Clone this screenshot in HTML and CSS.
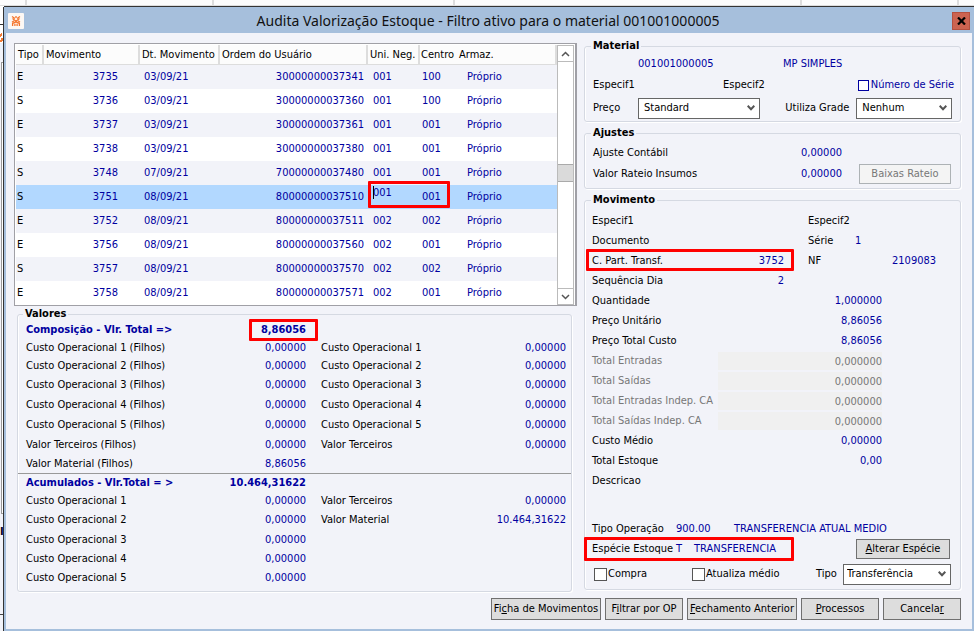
FILE: index.html
```
<!DOCTYPE html>
<html lang="pt-BR">
<head>
    <meta charset="utf-8">
    <title>Audita Valorização Estoque</title>
    <link rel="stylesheet" href="styles.css">
</head>
<body>

<div class="back-header">
    <span></span><span></span><span></span><span></span><span></span><span></span>
</div>

<div class="desktop">
    <div class="back-edge">
        <div class="back-title"></div>
        <div class="back-logo">
            <svg width="3" height="10" viewBox="0 0 3 10"><path d="M0 1h1v-1h1v3h-1v1h-1zM1 5h2v3h-1v1h-2v-2h1z" fill="#f47b35"/></svg>
        </div>
        <div class="back-tool"></div>
        <div class="back-list"></div>
        <div class="back-text">I</div>
        <div class="back-foot"></div>
    </div>

    <div class="window">
        <div class="titlebar">
            <svg class="app-icon" width="16" height="16" viewBox="0 0 16 16">
                <rect x="0" y="0" width="16" height="16" rx="1" fill="#fdf8f4"/>
                <g fill="none" stroke="#f4742b" stroke-width="1.3">
                    <path d="M4 3.500L7 5.500M12 3.500L9 5.500M4.500 5.500L8 8.200L11.500 5.500M8 3v2"/>
                    <path d="M4 9.200L6 7.800M12 9.200L10 7.800"/>
                    <path d="M4.600 13v-2.500L8 8.800l3.400 1.700V13M6.900 13v-2.200M9.100 13v-2.200"/>
                </g>
            </svg>
            <h1>Audita Valorização Estoque - Filtro ativo para o material 001001000005</h1>
            <button type="button" class="close" aria-label="Fechar">
                <svg width="9" height="8" viewBox="0 0 9 8"><path d="M1 .5l7 7M8 .5l-7 7" fill="none" stroke="#000" stroke-width="2.200"/></svg>
            </button>
        </div>

        <form class="client">
            <div class="columns">
                <div class="left">
                    <div class="list">
                        <table>
                            <colgroup>
                                <col class="c-tipo"><col class="c-mov"><col class="c-data"><col class="c-ordem"><col class="c-uni"><col class="c-centro"><col>
                            </colgroup>
                            <thead>
                                <tr><th>Tipo</th><th>Movimento</th><th>Dt. Movimento</th><th>Ordem do Usuário</th><th>Uni. Neg.</th><th class="open">Centro</th><th>Armaz.</th></tr>
                            </thead>
                            <tbody>
                                <tr><td>E</td><td>3735</td><td>03/09/21</td><td>30000000037341</td><td>001</td><td>100</td><td>Próprio</td></tr>
                                <tr><td>S</td><td>3736</td><td>03/09/21</td><td>30000000037360</td><td>001</td><td>100</td><td>Próprio</td></tr>
                                <tr><td>E</td><td>3737</td><td>03/09/21</td><td>30000000037361</td><td>001</td><td>001</td><td>Próprio</td></tr>
                                <tr><td>S</td><td>3738</td><td>03/09/21</td><td>30000000037380</td><td>001</td><td>001</td><td>Próprio</td></tr>
                                <tr><td>S</td><td>3748</td><td>07/09/21</td><td>70000000037480</td><td>001</td><td>001</td><td>Próprio</td></tr>
                                <tr class="selected"><td>S</td><td>3751</td><td>08/09/21</td><td>80000000037510</td><td class="editing"><input type="text" value="001" aria-label="Uni. Neg."><i class="caret"></i><i class="mark mark-cells"></i></td><td>001</td><td>Próprio</td></tr>
                                <tr><td>E</td><td>3752</td><td>08/09/21</td><td>80000000037511</td><td>002</td><td>002</td><td>Próprio</td></tr>
                                <tr><td>E</td><td>3756</td><td>08/09/21</td><td>80000000037560</td><td>002</td><td>001</td><td>Próprio</td></tr>
                                <tr><td>S</td><td>3757</td><td>08/09/21</td><td>80000000037570</td><td>002</td><td>002</td><td>Próprio</td></tr>
                                <tr><td>E</td><td>3758</td><td>08/09/21</td><td>80000000037571</td><td>002</td><td>001</td><td>Próprio</td></tr>
                            </tbody>
                        </table>
                        <div class="scrollbar">
                            <button type="button" aria-label="Subir"><svg width="9" height="6" viewBox="0 0 9 6"><path d="M1 5l3.500-3.500L8 5" fill="none" stroke="#555" stroke-width="1.500"/></svg></button>
                            <div class="track-above"></div>
                            <div class="thumb"></div>
                            <div class="track-below"></div>
                            <button type="button" aria-label="Descer"><svg width="9" height="6" viewBox="0 0 9 6"><path d="M1 1l3.500 3.500L8 1" fill="none" stroke="#555" stroke-width="1.500"/></svg></button>
                        </div>
                    </div>

                    <fieldset class="valores">
                        <legend>Valores</legend>
                        <div class="line total"><div class="pair"><span>Composição - Vlr. Total =&gt;</span><b class="marked">8,86056<i class="mark mark-total"></i></b></div></div>
                        <div class="line"><div class="pair"><span>Custo Operacional 1 (Filhos)</span><b>0,00000</b></div><div class="pair"><span>Custo Operacional 1</span><b>0,00000</b></div></div>
                        <div class="line"><div class="pair"><span>Custo Operacional 2 (Filhos)</span><b>0,00000</b></div><div class="pair"><span>Custo Operacional 2</span><b>0,00000</b></div></div>
                        <div class="line tall"><div class="pair"><span>Custo Operacional 3 (Filhos)</span><b>0,00000</b></div><div class="pair"><span>Custo Operacional 3</span><b>0,00000</b></div></div>
                        <div class="line tall"><div class="pair"><span>Custo Operacional 4 (Filhos)</span><b>0,00000</b></div><div class="pair"><span>Custo Operacional 4</span><b>0,00000</b></div></div>
                        <div class="line tall"><div class="pair"><span>Custo Operacional 5 (Filhos)</span><b>0,00000</b></div><div class="pair"><span>Custo Operacional 5</span><b>0,00000</b></div></div>
                        <div class="line tall"><div class="pair"><span>Valor Terceiros (Filhos)</span><b>0,00000</b></div><div class="pair"><span>Valor Terceiros</span><b>0,00000</b></div></div>
                        <div class="line"><div class="pair"><span>Valor Material (Filhos)</span><b>8,86056</b></div></div>
                        <hr>
                        <div class="line total"><div class="pair"><span>Acumulados - Vlr.Total = &gt;</span><b>10.464,31622</b></div></div>
                        <div class="line"><div class="pair"><span>Custo Operacional 1</span><b>0,00000</b></div><div class="pair"><span>Valor Terceiros</span><b>0,00000</b></div></div>
                        <div class="line tall"><div class="pair"><span>Custo Operacional 2</span><b>0,00000</b></div><div class="pair"><span>Valor Material</span><b>10.464,31622</b></div></div>
                        <div class="line tall"><div class="pair"><span>Custo Operacional 3</span><b>0,00000</b></div></div>
                        <div class="line"><div class="pair"><span>Custo Operacional 4</span><b>0,00000</b></div></div>
                        <div class="line tall"><div class="pair"><span>Custo Operacional 5</span><b>0,00000</b></div></div>
                    </fieldset>
                </div>

                <div class="right">
                    <fieldset class="material">
                        <legend>Material</legend>
                        <div class="mat-code"><b>001001000005</b><b>MP SIMPLES</b></div>
                        <div class="mat-spec">
                            <span>Especif1</span><span>Especif2</span>
                            <label class="check blue"><input type="checkbox" name="serie">Número de Série</label>
                        </div>
                        <div class="mat-price">
                            <label for="preco">Preço</label>
                            <select id="preco"><option>Standard</option></select>
                            <label for="grade">Utiliza Grade</label>
                            <select id="grade"><option>Nenhum</option></select>
                        </div>
                    </fieldset>

                    <fieldset class="ajustes">
                        <legend>Ajustes</legend>
                        <div class="adj"><span>Ajuste Contábil</span><b>0,00000</b></div>
                        <div class="adj"><span>Valor Rateio Insumos</span><b>0,00000</b><button type="button" class="btn" disabled>Baixas Rateio</button></div>
                    </fieldset>

                    <fieldset class="movimento">
                        <legend>Movimento</legend>
                        <div class="mov"><span>Especif1</span><span class="second">Especif2</span></div>
                        <div class="mov"><span>Documento</span><span class="second">Série</span><b class="serie">1</b></div>
                        <div class="mov"><i class="mark mark-part"></i><span>C. Part. Transf.</span><b class="short">3752</b><span class="second">NF</span><b class="nf">2109083</b></div>
                        <div class="mov"><span>Sequência Dia</span><b class="short">2</b></div>
                        <div class="mov"><span>Quantidade</span><b class="long">1,000000</b></div>
                        <div class="mov"><span>Preço Unitário</span><b class="long">8,86056</b></div>
                        <div class="mov"><span>Preço Total Custo</span><b class="long">8,86056</b></div>
                        <div class="mov off"><label for="ent">Total Entradas</label><input type="text" id="ent" value="0,000000" disabled></div>
                        <div class="mov off"><label for="sai">Total Saídas</label><input type="text" id="sai" value="0,000000" disabled></div>
                        <div class="mov off"><label for="entca">Total Entradas Indep. CA</label><input type="text" id="entca" value="0,000000" disabled></div>
                        <div class="mov off"><label for="saica">Total Saídas Indep. CA</label><input type="text" id="saica" value="0,000000" disabled></div>
                        <div class="mov"><span>Custo Médio</span><b class="long">0,00000</b></div>
                        <div class="mov"><span>Total Estoque</span><b class="long">0,00</b></div>
                        <div class="mov"><span>Descricao</span></div>

                        <div class="mov oper"><span>Tipo Operação</span><b>900.00</b><b class="name">TRANSFERENCIA ATUAL MEDIO</b></div>
                        <div class="mov especie"><i class="mark mark-especie"></i><span>Espécie Estoque</span><b>T</b><b class="name">TRANSFERENCIA</b><button type="button" class="btn"><u>A</u>lterar Espécie</button></div>
                        <div class="flags">
                            <label class="check"><input type="checkbox" name="compra">Compra</label>
                            <label class="check"><input type="checkbox" name="medio">Atualiza médio</label>
                            <label for="tipo">Tipo</label>
                            <select id="tipo"><option>Transferência</option></select>
                        </div>
                    </fieldset>
                </div>
            </div>

            <div class="actions">
                <button type="button" class="btn wide">Fi<u>c</u>ha de Movimentos</button>
                <button type="button" class="btn">F<u>i</u>ltrar por OP</button>
                <button type="button" class="btn wide"><u>F</u>echamento Anterior</button>
                <button type="button" class="btn"><u>P</u>rocessos</button>
                <button type="button" class="btn">Cancela<u>r</u></button>
            </div>
        </form>
    </div>
</div>

</body>
</html>
```
FILE: styles.css
```
* {
    box-sizing: border-box;
}

body {
    margin: 0;
    min-height: 100vh;
    display: flex;
    flex-direction: column;
    font-family: "DejaVu Sans Condensed", "DejaVu Sans", sans-serif;
    font-size: 11px;
    line-height: 14px;
    color: #000;
    background: #fff;
}

/* window behind */
.back-header {
    display: flex;
    height: 7px;
    background: #fcfcfc;
    border-bottom: 1px solid #fff;
    box-shadow: inset 0 -1px #ddd;
}

.back-header span {
    height: 5px;
    border-right: 2px solid #ddd;
    flex: 187;
}

.back-header span:first-child { flex: 25; }
.back-header span:nth-child(3) { flex: 242; }
.back-header span:nth-child(4) { flex: 348; }
.back-header span:nth-child(5) { flex: 157; }
.back-header span:last-child { flex: 15; border: none; }

.desktop {
    flex: 1;
    display: flex;
}

.back-edge {
    width: 3px;
    overflow: hidden;
    display: flex;
    flex-direction: column;
    background: #f2f3f9;
}

.back-title {
    height: 18px;
    background: #fff;
    border-bottom: 1px solid #333;
}

.back-logo {
    height: 18px;
    padding-top: 8px;
    line-height: 0;
    background: #fff;
}

.back-tool {
    height: 7px;
    background: #eaf2fc;
}

.back-list {
    height: 452px;
    margin: 12px 0 11px 1px;
    border: 1px solid #999;
    border-right: none;
    background: #fff;
}

.back-text {
    font-weight: 700;
    color: #002;
}

.back-foot {
    margin-top: 75px;
    border-top: 1px solid #444;
    flex: 1;
}

/* main window */
.window {
    flex: 1;
    display: flex;
    flex-direction: column;
    border: 2px solid #a6bfdc;
    border-top: none;
    background: #f2f3f9;
    box-shadow: -1px 0 #333, 0 -1px #333;
    margin-left: 1px;
}

.titlebar {
    display: flex;
    align-items: center;
    height: 26px;
    padding: 1px 2px 0;
    background: #a6bfdc;
}

.titlebar h1 {
    flex: 1;
    margin: 0;
    text-align: center;
    font-family: "Noto Sans", "Open Sans", sans-serif;
    font-size: 14px;
    font-weight: 400;
    line-height: 20px;
    color: #111;
}

.close {
    display: flex;
    align-items: center;
    justify-content: center;
    width: 18px;
    height: 18px;
    padding: 0;
    border: 1px solid #b5503f;
    background: #cc6350;
}

.client {
    flex: 1;
    display: flex;
    flex-direction: column;
    padding: 6px 11px 9px 8px;
}

.columns {
    display: grid;
    grid-template-columns: 563fr 377fr;
    gap: 7px;
}

.left {
    padding-top: 4px;
}

b {
    font-weight: 400;
    color: #0000a0;
}

u {
    text-underline-offset: 1px;
}

/* movement list */
.list {
    display: flex;
    padding: 1px 1px 0;
    border: 1px solid #a0a0a6;
    border-right-width: 2px;
    background: #fff;
}

table {
    flex: 1;
    width: 0;
    table-layout: fixed;
    border-collapse: separate;
    border-spacing: 0;
}

.c-tipo { width: 28px; }
.c-mov { width: 96px; }
.c-data { width: 80px; }
.c-ordem { width: 148px; }
.c-uni { width: 52px; }
.c-centro { width: 37px; }

th {
    height: 20px;
    padding: 0 0 0 2px;
    font-weight: 400;
    text-align: left;
    white-space: nowrap;
    background: #fcfcfc;
    border-right: 2px solid #ddd;
    border-bottom: 1px solid #ddd;
}

th.open {
    border-right: none;
    padding-left: 1px;
}

td {
    height: 24px;
    padding: 0 2px;
    color: #0000a0;
    white-space: nowrap;
}

td:first-child { color: #000; padding-left: 1px; }
td:nth-child(2) { text-align: right; padding-right: 22px; }
td:nth-child(3) { padding-left: 4px; }
td:nth-child(4) { text-align: right; padding-right: 4px; }
td:nth-child(5) { padding-left: 5px; }
td:nth-child(7) { padding-left: 10px; }

tbody tr:nth-child(odd) {
    background: #f2f3f9;
}

tbody tr.selected {
    background: #b2d8ff;
}

.editing {
    position: relative;
    vertical-align: top;
}

.editing input {
    display: block;
    width: 40px;
    height: 15px;
    padding: 0;
    border: none;
    background: none;
    font: inherit;
    color: #0000a0;
}

.caret {
    position: absolute;
    left: 5px;
    top: 1px;
    width: 1px;
    height: 13px;
    background: #000;
}

.scrollbar {
    display: flex;
    flex-direction: column;
    width: 17px;
    border: 1px solid #bbb;
}

.scrollbar button {
    height: 16px;
    padding: 0;
    line-height: 0;
    border: none;
    border-bottom: 1px solid #bbb;
    background: #fff;
}

.scrollbar button:last-child {
    border-top: 1px solid #bbb;
    border-bottom: none;
}

.track-above { flex: 101; }
.track-below { flex: 105; }

.thumb {
    height: 18px;
    background: #dadada;
    border: 1px solid #aaa;
    border-width: 1px 0;
}

/* groups */
fieldset {
    min-width: 0;
    margin: 0;
    padding: 0 0 0 8px;
    border: 1px solid #d5d9e2;
    border-radius: 3px;
    box-shadow: inset 1px 0 #fff, 1px 1px #fff;
}

legend {
    margin-left: -2px;
    padding: 0 2px;
    font-weight: 700;
}

.valores {
    margin: 1px 5px 0 3px;
    padding-right: 5px;
    padding-bottom: 3px;
}

.valores legend {
    margin-left: -3px;
}

.line {
    display: flex;
    gap: 15px;
    height: 18px;
    line-height: 18px;
}

.line.tall {
    height: 20px;
    line-height: 20px;
}

.pair {
    flex: 0 1 280px;
    display: flex;
    justify-content: space-between;
}

.pair + .pair {
    flex: 1;
}

.total {
    line-height: 17px;
}

.total span,
.total b {
    font-weight: 700;
    color: #0000a0;
}

.valores hr {
    margin: 0 -5px 0 -8px;
    border: none;
    border-top: 1px solid #999;
}

/* red highlights */
.mark {
    position: absolute;
    border: 3px solid #f00;
    border-radius: 1px;
}

.marked {
    position: relative;
}

.mark-cells { left: 0; top: -4px; width: 82px; height: 27px; z-index: 1; }
.mark-total { right: -12px; top: -2px; width: 69px; height: 22px; }
.mark-part { left: -6px; top: -2px; width: 208px; height: 22px; }
.mark-especie { left: -8px; top: -2px; width: 210px; height: 24px; }

/* material */
.right {
    display: flex;
    flex-direction: column;
    gap: 4px;
}

.mat-code,
.mat-spec,
.mat-price,
.adj,
.flags {
    display: flex;
    align-items: center;
}

.mat-code { height: 22px; padding-left: 45px; }
.mat-code b { width: 145px; }
.mat-spec { height: 20px; }
.mat-spec span { width: 130px; }
.mat-spec .check { margin-left: auto; margin-right: 6px; }
.mat-price { height: 26px; padding-right: 8px; }
.mat-price label { width: 45px; }
.mat-price select { flex: 124; }
.mat-price select + label { width: 96px; padding-left: 25px; white-space: nowrap; }
.mat-price label + select:last-child { flex: 94; }

.check {
    display: flex;
    align-items: center;
    gap: 1px;
    white-space: nowrap;
}

.check input {
    appearance: none;
    width: 13px;
    height: 13px;
    margin: 0;
    border: 1px solid #555;
    background: #fff;
}

.check.blue {
    gap: 2px;
    color: #0000a0;
}

.check.blue input {
    width: 11px;
    height: 11px;
    border-color: #0000a0;
}

select {
    appearance: none;
    height: 21px;
    min-width: 0;
    padding: 0 5px;
    border: 1px solid #666;
    border-radius: 0;
    font: inherit;
    color: #000;
    background: #fff url("data:image/svg+xml,%3Csvg xmlns='http://www.w3.org/2000/svg' width='8' height='6'%3E%3Cpath d='M.7 .8L4 4.200 7.300 .8' fill='none' stroke='%23555' stroke-width='2'/%3E%3C/svg%3E") no-repeat right 4px center;
}

/* adjustments */
.ajustes {
    padding-top: 3px;
    padding-bottom: 3px;
}

.adj { height: 20px; }
.adj + .adj { height: 22px; }
.adj span { width: 129px; }
.adj b { width: 120px; text-align: right; }

.btn {
    width: 78px;
    height: 22px;
    padding: 0;
    border: 1px solid #707070;
    font: inherit;
    white-space: nowrap;
    color: #000;
    background: #ddd;
}

.btn.wide {
    width: 110px;
}

.btn:disabled {
    color: #777;
    border-color: #adb2b5;
    background: #f4f4f4;
}

.adj .btn {
    width: 92px;
    height: 20px;
    margin-left: 17px;
}

/* movement details */
.movimento {
    padding-top: 4px;
    padding-left: 7px;
}

.movimento legend {
    margin-left: -1px;
}

.mov {
    position: relative;
    display: grid;
    grid-template-columns: 126px 66px 24px 47px 27px 1fr;
    align-items: center;
    height: 20px;
    white-space: nowrap;
}

.mov > :first-child:not(.mark) { grid-column: 1; }
.mov .short { grid-column: 2; text-align: right; }
.mov .second { grid-column: 4; }
.mov .serie { grid-column: 5; }
.mov .nf { grid-column: 5 / 7; padding-left: 37px; }
.mov .long { grid-column: 2 / 6; text-align: right; }

.off {
    color: #777;
}

.off input {
    grid-column: 2 / 6;
    height: 18px;
    min-width: 0;
    padding: 0;
    border: none;
    font: inherit;
    text-align: right;
    color: #777;
    background: #f0f0f0;
}

.oper {
    margin-top: 28px;
}

.oper,
.especie {
    display: flex;
}

.oper span,
.especie span {
    width: 84px;
}

.oper b { width: 58px; }
.especie b { width: 18px; }
.oper .name, .especie .name { width: auto; }

.especie .btn {
    width: 94px;
    height: 20px;
    margin-left: auto;
    margin-right: 10px;
}

.flags {
    height: 30px;
    padding-left: 2px;
    padding-right: 9px;
}

.flags .check { width: 98px; }
.flags .check + .check { width: 124px; }
.flags label[for="tipo"] { width: 27px; }
.flags select { flex: 1; padding: 0 3px; }

.actions {
    display: flex;
    justify-content: flex-end;
    gap: 4px;
    margin-top: auto;
}
```
